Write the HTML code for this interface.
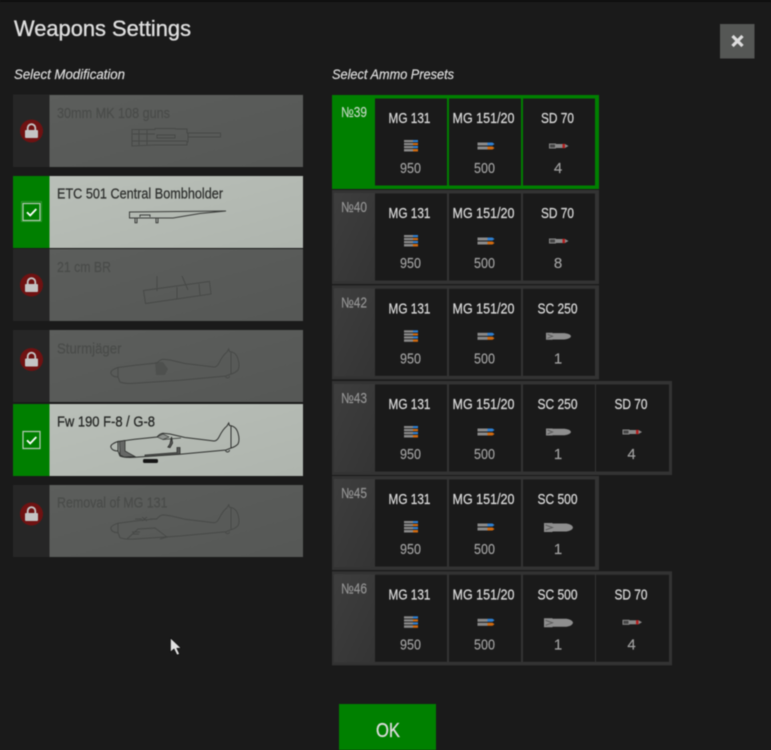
<!DOCTYPE html>
<html><head><meta charset="utf-8"><title>Weapons Settings</title>
<style>
html,body{margin:0;padding:0;background:#1a1a1a;width:771px;height:750px;overflow:hidden}
svg{display:block;filter:blur(.45px)}
text{font-family:"Liberation Sans",sans-serif}
.n{font-size:15px;fill:#d8d8d8;stroke:#d8d8d8;stroke-width:.25;text-anchor:middle}
.c{font-size:15px;fill:#a2a2a2;stroke:#a2a2a2;stroke-width:.15;text-anchor:middle}
.p{font-size:14.500px;fill:#969696;stroke:#969696;stroke-width:.15}
.l{font-size:14.500px;fill:#4a4c4a;stroke:#4a4c4a;stroke-width:.25}
.s{font-size:14.500px;fill:#2e302e;stroke:#2e302e;stroke-width:.25}
.h{font-size:13.500px;font-style:italic;fill:#dcdcdc;stroke:#dcdcdc;stroke-width:.2}
.o{fill:none;stroke:#474947;stroke-width:1}
</style></head><body>
<svg width="771" height="750" viewBox="0 0 771 750" xmlns="http://www.w3.org/2000/svg">
<defs>
<linearGradient id="lk" x1="0" y1="0" x2="1" y2="1"><stop offset="0" stop-color="#5c5e5c"/><stop offset="1" stop-color="#565856"/></linearGradient>
<linearGradient id="sl" x1="0" y1="0" x2="1" y2="1"><stop offset="0" stop-color="#b9bfb8"/><stop offset="1" stop-color="#afb5ae"/></linearGradient>
<linearGradient id="sd" x1="0" y1="0" x2="1" y2="1"><stop offset="0" stop-color="#3e3e3e"/><stop offset="1" stop-color="#343434"/></linearGradient>
<g id="lock"><circle cx="0" cy="0" r="11.500" fill="#6f1212"/><path d="M-3.800 -1V-3a3.800 3.800 0 0 1 7.600 0V-1" fill="none" stroke="#c4c4c4" stroke-width="1.800"/><rect x="-6.500" y="-1" width="13" height="8" rx="1" fill="#c4c4c4"/></g>
<g id="check"><rect x="-8.500" y="-8.500" width="17" height="17" fill="none" stroke="#b8ccb8" stroke-width="1.200"/><path d="M-4.500 0.300L-1.300 3.500L4.800 -3" fill="none" stroke="#fff" stroke-width="1.800"/></g>
<g id="mg131"><rect x="-7" y="-6" width="9" height="2.200" fill="#8a8a8a"/><rect x="2" y="-6" width="5" height="2.200" fill="#2f7fd0"/><rect x="-7" y="-3" width="9" height="2.200" fill="#8a8a8a"/><rect x="2" y="-3" width="5" height="2.200" fill="#d06a10"/><rect x="-7" y="0" width="9" height="2.200" fill="#8a8a8a"/><rect x="2" y="0" width="5" height="2.200" fill="#2f7fd0"/><rect x="-7" y="3" width="9" height="2.500" fill="#8a8a8a"/><rect x="2" y="3" width="5" height="2.500" fill="#d06a10"/></g>
<g id="mg151"><rect x="-8" y="-3.500" width="10" height="3" fill="#8a8a8a"/><path d="M2 -3.500H7L9 -2L7 -.5H2Z" fill="#2f7fd0"/><rect x="-8" y=".5" width="10" height="3" fill="#8a8a8a"/><path d="M2 .5H7L9 2L7 3.500H2Z" fill="#d06a10"/></g>
<g id="sd70"><rect x="-9" y="-2" width="6" height="4" fill="#444" stroke="#8a8a8a"/><path d="M-3 -2H4V2H-3Z" fill="#8a8a8a"/><rect x="4" y="-2.200" width="2.500" height="4.400" fill="#b52020"/><path d="M6.500 -2L10 0L6.500 2Z" fill="#8a8a8a"/></g>
<g id="sc250"><path d="M-12.500 -3.500H-6V-3.200H6Q12 -2.500 12.500 0Q12 2.500 6 3.200H-6V3.500H-12.500Z" fill="#8e8e8e"/><path d="M-11 -2L-6 0L-11 2" fill="none" stroke="#5c5c5c"/></g>
<g id="sc500"><path d="M-14.500 -4.500H-6V-4H8Q14 -3 14.500 0Q14 3 8 4H-6V4.500H-14.500Z" fill="#8e8e8e"/><path d="M-13 -2.500L-6 0L-13 2.500" fill="none" stroke="#5c5c5c"/></g>
<path id="plane" d="M118 441.500L135 439.300L157 437Q160 433.500 163 433.200L170 434L185 437.500L214 441Q217 441 219 437Q223 429 227 426L228.700 423L229.500 425.500Q236 426 238 433Q240 440 238 444Q235 447 231 448L226 450L180 454.300L135 457.300Q125 458 120 456L118 451ZM118 441.500Q110.500 444 110.800 447Q112 451 118 451ZM231 425.500V448M225.500 450a2 2 0 0 0 4 0"/>
</defs>

<rect width="771" height="750" fill="#1a1a1a"/>
<rect width="771" height="2" fill="#0d0d0d"/>
<text x="14" y="36" font-size="22.500" fill="#dedede" stroke="#dedede" stroke-width=".35" textLength="177" lengthAdjust="spacingAndGlyphs">Weapons Settings</text>
<rect x="720" y="24" width="34.500" height="34.500" fill="#555755"/>
<path d="M732.500 36L742.500 46M742.500 36L732.500 46" stroke="#ddd" stroke-width="3.200"/>
<text class="h" x="14" y="79" textLength="111" lengthAdjust="spacingAndGlyphs">Select Modification</text>
<text class="h" x="332" y="79" textLength="122" lengthAdjust="spacingAndGlyphs">Select Ammo Presets</text>

<!-- Left column -->
<rect x="13" y="94.500" width="290" height="72.500" fill="#262626"/><rect x="49.500" y="95" width="253.500" height="72" fill="url(#lk)"/><use href="#lock" x="31.500" y="131"/>
<text class="l" x="57" y="118" textLength="113" lengthAdjust="spacingAndGlyphs">30mm MK 108 guns</text>
<path class="o" d="M132 129.500H155V128.500H175L176 129H187V133H220.500V137H188V142H187V145H155L132 146ZM139 129.500V145M147 129.500V145M132 134H155M132 141H187M157 135H175V138H157ZM188 133V137"/>

<rect x="13" y="176" width="290" height="72" fill="#007f00"/><rect x="49.500" y="176" width="253.500" height="72" fill="url(#sl)"/><use href="#check" x="31.500" y="212"/>
<rect x="21.500" y="201.500" width="20" height="20" fill="none" stroke="#3a9a3a" stroke-width=".8"/>
<text class="s" x="57" y="198.500" textLength="166" lengthAdjust="spacingAndGlyphs">ETC 501 Central Bombholder</text>
<path d="M129.500 212L226 211L200 213.500L173 218H129.500ZM135 218V222.700H137V218M156 218V222.700H158V218M140 217V215H150V217" fill="none" stroke="#3a3c3a" stroke-width="1"/>

<rect x="13" y="249" width="290" height="72" fill="#262626"/><rect x="49.500" y="249" width="253.500" height="72" fill="url(#lk)"/><use href="#lock" x="31.500" y="285"/>
<text class="l" x="57" y="272" textLength="54" lengthAdjust="spacingAndGlyphs">21 cm BR</text>
<path class="o" d="M143.500 290.500L209.500 281.500L211 294L145.500 303.500ZM157 276V291M182 276L188 290M177 287V299M199 284L200 295"/>

<rect x="13" y="330" width="290" height="72" fill="#262626"/><rect x="49.500" y="330" width="253.500" height="72" fill="url(#lk)"/><use href="#lock" x="31.500" y="359.500"/>
<text class="l" x="57" y="353.500" textLength="64.500" lengthAdjust="spacingAndGlyphs">Sturmjäger</text>
<use href="#plane" y="-74" class="o"/>
<path d="M155 362H163L168 369L165 375H156Z" fill="#474947" opacity=".6"/>

<rect x="13" y="404" width="290" height="72" fill="#007f00"/><rect x="49.500" y="404" width="253.500" height="72" fill="url(#sl)"/><use href="#check" x="31.500" y="440"/>
<text class="s" x="57" y="426.500" textLength="98" lengthAdjust="spacingAndGlyphs" style="fill:#242624;stroke:#242624">Fw 190 F-8 / G-8</text>
<use href="#plane" fill="none" stroke="#2e302e" stroke-width="1"/>
<path d="M119.500 441.500L125 440.500V451L135 456.500L124 457L120 455Z" fill="#666866" stroke="#2e302e" stroke-width=".8"/>
<path d="M145 456.500V455L177 452.500V447.500H180V454L145 456.500Z" fill="#555755" stroke="#2e302e" stroke-width=".8"/>
<rect x="143" y="459" width="15" height="4" rx="1.500" fill="#151515"/>
<path d="M171.500 437L170 444L168 447L170 447.500L172.500 443Z" fill="#666866" stroke="#2e302e" stroke-width="1"/>
<path d="M157 437L163 434L169 437L163 439.500Z" fill="#8e928e" stroke="#2e302e" stroke-width=".6"/>
<path d="M163 439.500L181 438" fill="none" stroke="#2e302e" stroke-width=".7"/>

<rect x="13" y="485" width="290" height="72" fill="#262626"/><rect x="49.500" y="485" width="253.500" height="72" fill="url(#lk)"/><use href="#lock" x="31.500" y="514"/>
<text class="l" x="57" y="507.500" textLength="110.500" lengthAdjust="spacingAndGlyphs">Removal of MG 131</text>
<use href="#plane" y="81.700" class="o"/>
<path class="o" d="M135 519H142M150 519H157M142 517L147 521M147 517L142 521M132 532H140M132 534H139M127 539L138 529L155 528L167 537L160 539"/>

<!-- Row 39 -->
<g transform="translate(0,95)">
<rect x="332" y="0" width="267" height="94" fill="#008000"/>
<rect x="375" y="3.500" width="72" height="87" fill="#1a1a1a"/><rect x="449" y="3.500" width="72" height="87" fill="#1a1a1a"/><rect x="523" y="3.500" width="72" height="87" fill="#1a1a1a"/>
<text class="p" x="341" y="22" textLength="26" lengthAdjust="spacingAndGlyphs" style="fill:#c4d8c4;stroke:#c4d8c4">№39</text>
<text class="n" x="409.500" y="28" textLength="42" lengthAdjust="spacingAndGlyphs">MG 131</text><use href="#mg131" x="411" y="51"/><text class="c" x="410.500" y="78" textLength="21" lengthAdjust="spacingAndGlyphs">950</text>
<text class="n" x="483.500" y="28" textLength="62" lengthAdjust="spacingAndGlyphs">MG 151/20</text><use href="#mg151" x="485.500" y="51"/><text class="c" x="484.500" y="78" textLength="21" lengthAdjust="spacingAndGlyphs">500</text>
<text class="n" x="557.500" y="28" textLength="33" lengthAdjust="spacingAndGlyphs">SD 70</text><use href="#sd70" x="558.500" y="51"/><text class="c" x="558" y="78">4</text>
</g>
<!-- Row 40 -->
<g transform="translate(0,190)">
<rect x="332" y="0" width="267" height="94" fill="#333"/><rect x="334" y="3" width="41" height="88" fill="url(#sd)"/>
<rect x="375" y="3.500" width="72" height="87" fill="#1a1a1a"/><rect x="449" y="3.500" width="72" height="87" fill="#1a1a1a"/><rect x="523" y="3.500" width="72" height="87" fill="#1a1a1a"/>
<text class="p" x="341" y="22" textLength="26" lengthAdjust="spacingAndGlyphs">№40</text>
<text class="n" x="409.500" y="28" textLength="42" lengthAdjust="spacingAndGlyphs">MG 131</text><use href="#mg131" x="411" y="51"/><text class="c" x="410.500" y="78" textLength="21" lengthAdjust="spacingAndGlyphs">950</text>
<text class="n" x="483.500" y="28" textLength="62" lengthAdjust="spacingAndGlyphs">MG 151/20</text><use href="#mg151" x="485.500" y="51"/><text class="c" x="484.500" y="78" textLength="21" lengthAdjust="spacingAndGlyphs">500</text>
<text class="n" x="557.500" y="28" textLength="33" lengthAdjust="spacingAndGlyphs">SD 70</text><use href="#sd70" x="558.500" y="51"/><text class="c" x="558" y="78">8</text>
</g>
<!-- Row 42 -->
<g transform="translate(0,285.300)">
<rect x="332" y="0" width="267" height="94" fill="#333"/><rect x="334" y="3" width="41" height="88" fill="url(#sd)"/>
<rect x="375" y="3.500" width="72" height="87" fill="#1a1a1a"/><rect x="449" y="3.500" width="72" height="87" fill="#1a1a1a"/><rect x="523" y="3.500" width="72" height="87" fill="#1a1a1a"/>
<text class="p" x="341" y="22" textLength="26" lengthAdjust="spacingAndGlyphs">№42</text>
<text class="n" x="409.500" y="28" textLength="42" lengthAdjust="spacingAndGlyphs">MG 131</text><use href="#mg131" x="411" y="51"/><text class="c" x="410.500" y="78" textLength="21" lengthAdjust="spacingAndGlyphs">950</text>
<text class="n" x="483.500" y="28" textLength="62" lengthAdjust="spacingAndGlyphs">MG 151/20</text><use href="#mg151" x="485.500" y="51"/><text class="c" x="484.500" y="78" textLength="21" lengthAdjust="spacingAndGlyphs">500</text>
<text class="n" x="557.500" y="28" textLength="40" lengthAdjust="spacingAndGlyphs">SC 250</text><use href="#sc250" x="558.500" y="51"/><text class="c" x="558" y="78">1</text>
</g>
<!-- Row 43 -->
<g transform="translate(0,381)">
<rect x="332" y="0" width="340" height="94" fill="#333"/><rect x="334" y="3" width="41" height="88" fill="url(#sd)"/>
<rect x="375" y="3.500" width="72" height="87" fill="#1a1a1a"/><rect x="449" y="3.500" width="72" height="87" fill="#1a1a1a"/><rect x="523" y="3.500" width="72" height="87" fill="#1a1a1a"/><rect x="596" y="3.500" width="73" height="87" fill="#1a1a1a"/>
<text class="p" x="341" y="22" textLength="26" lengthAdjust="spacingAndGlyphs">№43</text>
<text class="n" x="409.500" y="28" textLength="42" lengthAdjust="spacingAndGlyphs">MG 131</text><use href="#mg131" x="411" y="51"/><text class="c" x="410.500" y="78" textLength="21" lengthAdjust="spacingAndGlyphs">950</text>
<text class="n" x="483.500" y="28" textLength="62" lengthAdjust="spacingAndGlyphs">MG 151/20</text><use href="#mg151" x="485.500" y="51"/><text class="c" x="484.500" y="78" textLength="21" lengthAdjust="spacingAndGlyphs">500</text>
<text class="n" x="557.500" y="28" textLength="40" lengthAdjust="spacingAndGlyphs">SC 250</text><use href="#sc250" x="558.500" y="51"/><text class="c" x="558" y="78">1</text>
<text class="n" x="631" y="28" textLength="33" lengthAdjust="spacingAndGlyphs">SD 70</text><use href="#sd70" x="632" y="51"/><text class="c" x="631.500" y="78">4</text>
</g>
<!-- Row 45 -->
<g transform="translate(0,476)">
<rect x="332" y="0" width="267" height="94" fill="#333"/><rect x="334" y="3" width="41" height="88" fill="url(#sd)"/>
<rect x="375" y="3.500" width="72" height="87" fill="#1a1a1a"/><rect x="449" y="3.500" width="72" height="87" fill="#1a1a1a"/><rect x="523" y="3.500" width="72" height="87" fill="#1a1a1a"/>
<text class="p" x="341" y="22" textLength="26" lengthAdjust="spacingAndGlyphs">№45</text>
<text class="n" x="409.500" y="28" textLength="42" lengthAdjust="spacingAndGlyphs">MG 131</text><use href="#mg131" x="411" y="51"/><text class="c" x="410.500" y="78" textLength="21" lengthAdjust="spacingAndGlyphs">950</text>
<text class="n" x="483.500" y="28" textLength="62" lengthAdjust="spacingAndGlyphs">MG 151/20</text><use href="#mg151" x="485.500" y="51"/><text class="c" x="484.500" y="78" textLength="21" lengthAdjust="spacingAndGlyphs">500</text>
<text class="n" x="557.500" y="28" textLength="40" lengthAdjust="spacingAndGlyphs">SC 500</text><use href="#sc500" x="558.500" y="51.500"/><text class="c" x="558" y="78">1</text>
</g>
<!-- Row 46 -->
<g transform="translate(0,571.300)">
<rect x="332" y="0" width="340" height="94" fill="#333"/><rect x="334" y="3" width="41" height="88" fill="url(#sd)"/>
<rect x="375" y="3.500" width="72" height="87" fill="#1a1a1a"/><rect x="449" y="3.500" width="72" height="87" fill="#1a1a1a"/><rect x="523" y="3.500" width="72" height="87" fill="#1a1a1a"/><rect x="596" y="3.500" width="73" height="87" fill="#1a1a1a"/>
<text class="p" x="341" y="22" textLength="26" lengthAdjust="spacingAndGlyphs">№46</text>
<text class="n" x="409.500" y="28" textLength="42" lengthAdjust="spacingAndGlyphs">MG 131</text><use href="#mg131" x="411" y="51"/><text class="c" x="410.500" y="78" textLength="21" lengthAdjust="spacingAndGlyphs">950</text>
<text class="n" x="483.500" y="28" textLength="62" lengthAdjust="spacingAndGlyphs">MG 151/20</text><use href="#mg151" x="485.500" y="51"/><text class="c" x="484.500" y="78" textLength="21" lengthAdjust="spacingAndGlyphs">500</text>
<text class="n" x="557.500" y="28" textLength="40" lengthAdjust="spacingAndGlyphs">SC 500</text><use href="#sc500" x="558.500" y="51.500"/><text class="c" x="558" y="78">1</text>
<text class="n" x="631" y="28" textLength="33" lengthAdjust="spacingAndGlyphs">SD 70</text><use href="#sd70" x="632" y="51"/><text class="c" x="631.500" y="78">4</text>
</g>

<!-- OK -->
<rect x="339" y="704" width="97" height="46" fill="#008000"/>
<text x="388" y="737" font-size="20" fill="#dcdcdc" stroke="#dcdcdc" stroke-width=".3" text-anchor="middle" textLength="24" lengthAdjust="spacingAndGlyphs">OK</text>

<!-- Cursor -->
<path d="M170.500 638V652L174 649L177 655L179.500 654L176.800 648.300L181 648Z" fill="#e0e0e0" stroke="#0a0a0a" stroke-width=".6"/>
</svg>
</body></html>
